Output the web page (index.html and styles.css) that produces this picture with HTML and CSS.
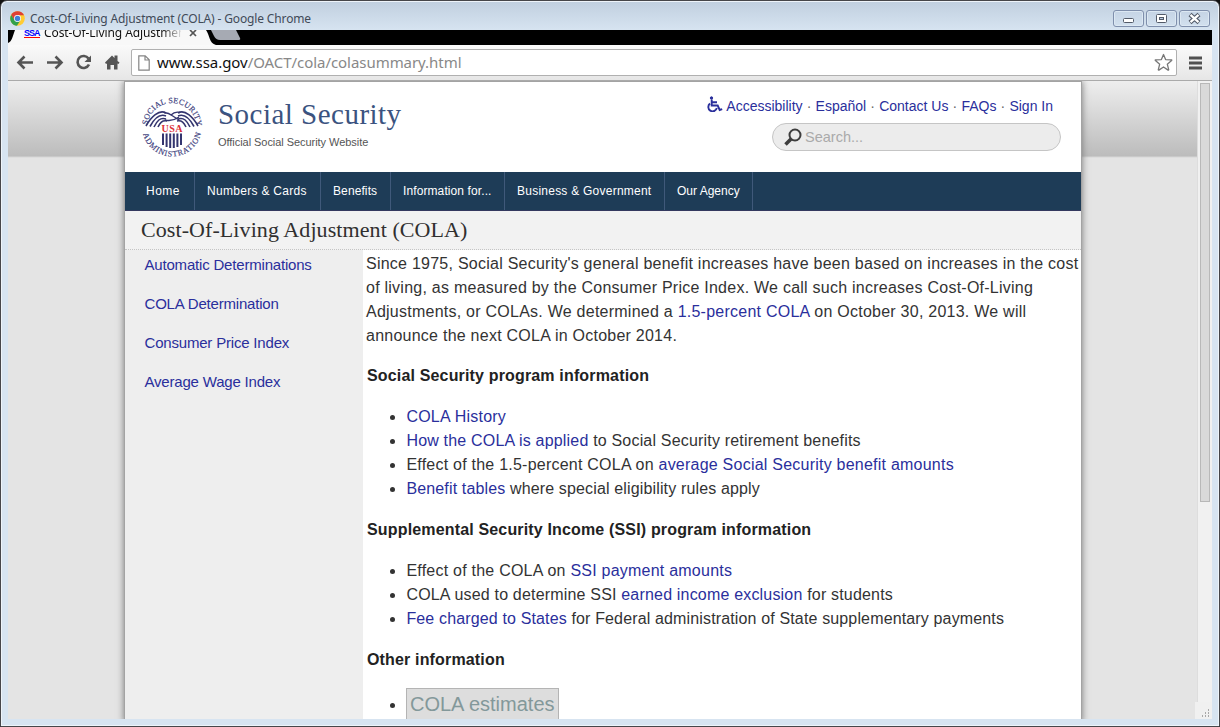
FILE: index.html
```html
<!DOCTYPE html>
<html lang="en">
<head>
<meta charset="utf-8">
<title>Cost-Of-Living Adjustment (COLA)</title>
<link rel="stylesheet" href="styles.css">
</head>
<body>
<div class="window">
  <header class="titlebar">
    <svg class="chrome-logo" width="15" height="15" viewBox="0 0 16 16">
      <circle cx="8" cy="8" r="7.8" fill="#fc3"/>
      <path d="M1.2 4.2A7.8 7.8 0 0 1 15 4.5L8 4.6 4.8 9.8z" fill="#dd4035"/>
      <path d="M1.2 4.2A7.8 7.8 0 0 0 7.4 15.8L11 10 5 9.8z" fill="#31a04c"/>
      <circle cx="8" cy="8" r="3.7" fill="#fff"/><circle cx="8" cy="8" r="2.9" fill="#3f7fd9"/>
    </svg>
    <span class="window-title">Cost-Of-Living Adjustment (COLA) - Google Chrome</span>
    <div class="controls">
      <span class="control"><svg width="31" height="17"><rect x="10.500" y="8.500" width="10" height="4" rx="1" fill="#fff" stroke="#525a68"/></svg></span>
      <span class="control"><svg width="31" height="17"><rect x="10.500" y="4.500" width="10" height="8" rx="1" fill="#fff" stroke="#525a68"/><rect x="13.500" y="7.500" width="4" height="2" fill="#b7c8de" stroke="#525a68"/></svg></span>
      <span class="control"><svg width="31" height="17"><path d="M11 4.500l9 8M20 4.500l-9 8" stroke="#525a68" stroke-width="4.400"/><path d="M11.500 4.900l8 7.200M19.500 4.900l-8 7.200" stroke="#fff" stroke-width="2.300"/></svg></span>
    </div>
  </header>

  <div class="tabstrip">
    <svg class="tab-shape" width="240" height="15"><path d="M0 15V13C4 12 5 5 7 0H198C202 6 201 13 208 15z" fill="#f8f8f8"/><path d="M203 0H228L232 8Q233 10 230 10H212Q208 10 206 6z" fill="#a6aab3"/></svg>
    <span class="favicon">SSA</span>
    <span class="tab-title">Cost-Of-Living Adjustmen</span>
    <svg class="tab-close" width="8" height="8"><path d="M1 1l6 6M7 1L1 7" stroke="#555" stroke-width="1.700"/></svg>
  </div>

  <div class="toolbar">
    <svg class="nav-icons" width="116" height="35" fill="none" stroke="#555" stroke-width="2.600">
      <path d="M25 17.500H11M16.500 11.500L10.500 17.500l6 6"/>
      <path d="M39 17.500H53M47.500 11.500L53.500 17.500l-6 6"/>
      <path d="M80.500 13.500A6 6 0 1 0 81 19.500"/><path d="M83 10.500v6.500h-6.500z" fill="#555" stroke="none"/>
      <path d="M97 17.500L104 10.500l2.500 2.500v-2.500h3v5.500l2 1.500-1 1.500-1-.5v6h-3.500v-4.500h-3.500v4.500H99v-6l-1 .5z" fill="#555" stroke="none"/>
    </svg>
    <div class="address">
      <svg class="doc" width="12" height="16"><path d="M.8.8h6.400l4 4v10.400H.8zM7 .8V5h4.200" fill="#fff" stroke="#858585" stroke-width="1.200"/></svg>
      <span class="url"><b>www.ssa.gov</b>/OACT/cola/colasummary.html</span>
      <svg class="star" width="19" height="19" viewBox="0 0 19 19"><path d="M9.500 1.500l2.100 5.100 5.900.2q.5.300.1.700l-4.300 3.700 1.400 5.500q-.1.600-.6.400L9.500 14l-4.600 3.100q-.6.100-.6-.4l1.400-5.500L1.400 7.500q-.4-.5.100-.7l5.900-.2z" fill="#fff" stroke="#777" stroke-width="1.300" stroke-linejoin="round"/></svg>
    </div>
    <svg class="menu" width="13" height="14"><path d="M0 2h13M0 7h13M0 12h13" stroke="#505050" stroke-width="3"/></svg>
  </div>

  <div class="viewport">
    <div class="page">
      <div class="sheet">
        <div class="masthead">
          <svg class="seal" width="64" height="64" viewBox="-32 -32 64 64">
            <defs><path id="arc-top" d="M-24.600 -1.500A24.700 24.700 0 0 1 24.600 -1.500"/><path id="arc-bottom" d="M-29 6.500A29.800 29.800 0 0 0 29 6.500"/></defs>
            <text class="seal-text"><textPath href="#arc-top" startOffset="0.500" textLength="73">SOCIAL SECURITY</textPath></text>
            <text class="seal-text"><textPath href="#arc-bottom" startOffset="0.500" textLength="79">ADMINISTRATION</textPath></text>
            <g fill="none" stroke="#34356f" stroke-width="1.600">
              <path d="M-6-14C-13-18-21-10-26-1M-6-11C-13-14-18-8-22-.5M-6-8C-12-10-15-6-18 0M-5-6C-10-7-12-4-14 0"/>
              <path d="M6-14C13-18 21-10 26-1M6-11C13-14 18-8 22-.5M6-8C12-10 15-6 18 0M5-6C10-7 12-4 14 0"/>
              <path d="M-8-14.500Q-3-14 0-11.500L7-7M8-14.500Q3-16-1-12M-7-7Q0-5 7-10" stroke-width="1.400"/>
              <path d="M-9 6.500V18M-5.400 6.500V20M-1.800 6.500V21M1.800 6.500V21M5.400 6.500V20M9 6.500V18" stroke-width="2"/>
            </g>
            <text class="seal-usa" x="-10.500" y="4.500" textLength="21">USA</text>
          </svg>
          <div class="brand"><div class="brand-name">Social Security</div><div class="tagline">Official Social Security Website</div></div>
          <div class="utilities">
            <div class="links">
              <svg class="wheelchair" width="16" height="16" fill="none" stroke="#2a2f9c" stroke-width="1.900"><circle cx="4.500" cy="2" r="1.200" fill="#2a2f9c" stroke-width="1"/><path d="M4.700 3.500v6h6l2 4.500 2.500-.8M5 6.300h5M3 7.600A4.300 4.300 0 1 0 9.800 12"/></svg>
              <a>Accessibility</a><i>·</i><a>Español</a><i>·</i><a>Contact Us</a><i>·</i><a>FAQs</a><i>·</i><a>Sign In</a>
            </div>
            <div class="search"><svg width="18" height="18" fill="none" stroke="#3d3d3d"><circle cx="11" cy="7" r="5.500" stroke-width="2"/><path d="M7 11l-5.500 5.500" stroke-width="3.500"/></svg><span>Search...</span></div>
          </div>
        </div>
        <nav class="menu-bar"><a class="m1">Home</a><a class="m2">Numbers &amp; Cards</a><a class="m3">Benefits</a><a class="m4">Information for...</a><a class="m5">Business &amp; Government</a><a class="m6">Our Agency</a></nav>
        <h1 class="page-title"><span>Cost-Of-Living Adjustment (COLA)</span></h1>
        <div class="columns">
          <aside class="sidebar"><a>Automatic Determinations</a><a>COLA Determination</a><a>Consumer Price Index</a><a>Average Wage Index</a></aside>
          <main class="content">
            <p>Since 1975, Social Security's general benefit increases have been based on increases in the cost<br>of living, as measured by the Consumer Price Index. We call such increases Cost-Of-Living<br>Adjustments, or COLAs. We determined a <a>1.5-percent COLA</a> on October 30, 2013. We will<br>announce the next COLA in October 2014.</p>
            <h2>Social Security program information</h2>
            <ul><li class="loose"><a>COLA History</a></li><li><a>How the COLA is applied</a> to Social Security retirement benefits</li><li class="loose">Effect of the 1.5-percent COLA on <a>average Social Security benefit amounts</a></li><li class="tight"><a>Benefit tables</a> where special eligibility rules apply</li></ul>
            <h2>Supplemental Security Income (SSI) program information</h2>
            <ul><li class="loose">Effect of the COLA on <a>SSI payment amounts</a></li><li>COLA used to determine SSI <a>earned income exclusion</a> for students</li><li class="tight"><a>Fee charged to States</a> for Federal administration of State supplementary payments</li></ul>
            <h2>Other information</h2>
            <ul class="last"><li><a class="estimate">COLA estimates</a></li></ul>
          </main>
        </div>
      </div>
    </div>
    <div class="scrollbar"><div class="thumb"></div><svg class="grip" width="17" height="17"><rect width="17" height="17" fill="#f0f0f0"/><path d="M13 7h1v2h-1zM10 10h1v2h-1zM13 10h1v2h-1zM7 13h1v2H7zM10 13h1v2h-1zM13 13h1v2h-1z" fill="#a8a8a8"/></svg></div>
  </div>
</div>
</body>
</html>
```

FILE: styles.css
```css
* { box-sizing: border-box; }
body { margin: 0; background: #111; width: 1220px; height: 727px; overflow: hidden; font-family: "Liberation Sans", Arial, sans-serif; }
svg { display: block; flex: none; }
.window { width: 1220px; height: 727px; padding: 0 7px 7px; border: 1px solid #46464a; border-radius: 7px 7px 0 0; background: linear-gradient(#c0cfdf, #d7e4f1 30px); box-shadow: inset 0 0 0 1px #eef4fa; }
.titlebar { height: 29px; display: flex; align-items: center; padding: 6px 2px 0 2px; }
.window-title { margin-left: 5px; font: 12px/16px "Noto Sans", sans-serif; letter-spacing: -.14px; color: #414a58; white-space: nowrap; }
.controls { margin-left: auto; display: flex; gap: 2px; }
.control { width: 31px; height: 17px; border: 1px solid #7f8fac; border-radius: 3px; background: linear-gradient(#c5d4e5, #d2e0ee); box-shadow: inset 0 0 0 1px #dce8f3; }
.control svg { margin: -1px; }
.tabstrip { height: 15px; background: #000; position: relative; display: flex; overflow: hidden; font: 12px/14px "Noto Sans", sans-serif; }
.tab-shape { position: absolute; left: 0; top: 0; }
.favicon { position: relative; margin: -1px 0 0 16px; height: 9px; border-bottom: 1px solid #f00; font: bold 9px/9px "Liberation Sans", sans-serif; letter-spacing: -1px; width: 16px; color: #00f; }
.tab-title { position: relative; margin: -4px 0 0 4px; width: 137px; height: 18px; line-height: 14px; overflow: hidden; white-space: nowrap; letter-spacing: -.1px; color: transparent; background: linear-gradient(90deg, #111 118px, #ddd 137px); background-clip: text; -webkit-background-clip: text; }
.tab-close { position: relative; margin: -1px 0 0 8px; }
.toolbar { height: 36px; border-bottom: 1px solid #aaa; background: linear-gradient(#fafafa, #e6e6e6); display: flex; align-items: center; }
.nav-icons { margin-right: 7px; }
.address { width: 1046px; height: 27px; border: 1px solid #b0b0b0; border-radius: 2px; background: #fff; display: flex; align-items: center; padding: 0 3px 0 6px; }
.url { margin: -2px 0 0 7px; font: 15px/24px "Noto Sans", sans-serif; letter-spacing: -.05px; color: #888; white-space: nowrap; }
.url b { font-weight: 400; color: #111; }
.star { margin-left: auto; }
.menu { margin-left: 12px; }
.viewport { display: flex; height: 638px; }
.page { width: 1189px; height: 638px; overflow: hidden; padding-left: 117px; background: linear-gradient(#eee, #bcbcbc 75px, #d6d6d6 76px, #e4e4e4 77px); }
.sheet { width: 956px; height: 640px; margin-top: 1px; background: #fff; box-shadow: 0 0 0 1px #a3a3a3, 0 0 7px 1px #777; display: flex; flex-direction: column; }
.masthead { height: 90px; display: flex; padding: 13px 20px 0 16px; }
.seal { overflow: visible; margin-left: -1px; }
.seal-text { font: 8px "Liberation Serif", serif; fill: #44457f; stroke: #44457f; stroke-width: .2px; }
.seal-usa { font: bold 10px "Liberation Serif", serif; fill: #dc3039; }
.brand { margin-left: 14px; }
.brand-name { margin-top: 3px; font: 29px/32px "Liberation Serif", serif; letter-spacing: .48px; color: #3b5380; white-space: nowrap; }
.tagline { margin-top: 4px; font-size: 11px; line-height: 16px; letter-spacing: -.05px; color: #555; white-space: nowrap; }
.utilities { margin-left: auto; display: flex; flex-direction: column; align-items: flex-end; }
.links { height: 22px; padding-right: 8px; display: flex; align-items: center; font-size: 14px; white-space: nowrap; }
.wheelchair { margin-right: 3px; margin-top: -5px; }
.links i { width: 13px; text-align: center; font-style: normal; color: #666; }
a { color: #2a2f9c; }
.search { width: 289px; height: 28px; margin-top: 6px; border: 1px solid #c5c5c5; border-radius: 14px; background: #ececec; display: flex; align-items: center; padding-left: 11px; gap: 3px; font-size: 14.5px; color: #aaa; }
.menu-bar { height: 39px; flex: none; background: #1e3c57; display: flex; border-bottom: 1px solid #34395f; }
.menu-bar a { padding-left: 12px; color: #fff; font-size: 12px; line-height: 38px; border-right: 1px solid #40597a; white-space: nowrap; }
.menu-bar .m1 { width: 70px; padding-left: 21px; letter-spacing: .5px; }
.menu-bar .m2 { width: 126px; letter-spacing: .3px; }
.menu-bar .m3 { width: 70px; letter-spacing: .1px; }
.menu-bar .m4 { width: 114px; letter-spacing: .1px; }
.menu-bar .m5 { width: 160px; letter-spacing: .24px; }
.menu-bar .m6 { width: 88px; }
.page-title { height: 39px; flex: none; margin: 0; padding-left: 16px; background: #f2f2f2; border-bottom: 1px dotted #c4c4c4; font: 22px/38px "Liberation Serif", serif; letter-spacing: .08px; color: #302f2f; white-space: nowrap; }
.columns { flex: 1; display: flex; min-height: 0; }
.sidebar { width: 238px; background: #eee; padding: 3px 0 0 19.5px; display: flex; flex-direction: column; gap: 15px; }
.sidebar a { font-size: 15px; line-height: 24px; letter-spacing: -.19px; white-space: nowrap; }
.content { width: 718px; padding: 2px 0 0 3px; font-size: 16px; line-height: 24px; color: #333; white-space: nowrap; }
.content p { margin: 0 0 16px; letter-spacing: .245px; }
.content h2 { margin: 0 0 17px 1px; font-size: 16px; line-height: 24px; letter-spacing: .16px; color: #222; }
.content ul { margin: 0 0 17px; padding-left: 40.4px; letter-spacing: .185px; }
.content .loose { letter-spacing: .23px; }
.content .tight { letter-spacing: .145px; }
.estimate { display: inline-block; vertical-align: top; border: 1px solid #b4b4b4; background: #ddd; color: #83989a; height: 34px; padding: 0 3px; font-size: 20px; line-height: 31px; letter-spacing: 0; }
.content .last { margin-top: -1px; padding-left: 40px; line-height: 34px; }
.scrollbar { position: relative; width: 15px; border-left: 1px solid #ddd; background: #f1f1f1; padding: 2px 1px; }
.thumb { height: 419px; width: 10px; margin-left: 1px; border: 1px solid #b8b8b8; background: #d9d9d9; }
.grip { position: absolute; right: 0; bottom: 0; }
```
